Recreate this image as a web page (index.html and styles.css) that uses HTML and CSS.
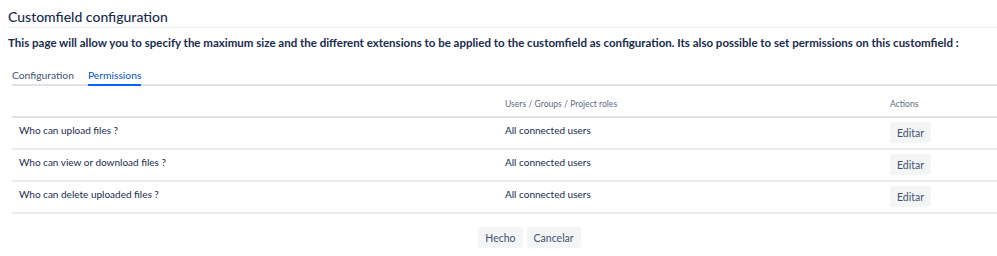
FILE: index.html
```html
<!DOCTYPE html>
<html lang="en">

<head>
    <meta charset="UTF-8">
    <title>Customfield configuration</title>
    <link rel="stylesheet" href="styles.css">
</head>

<body>
    <header class="page-header">
        <h2>Customfield configuration</h2>
    </header>
    <p class="description">
        This page will allow you to specify the maximum size and the different extensions to be applied to the customfield as configuration. Its also possible to set permissions on this customfield :
    </p>

    <div class="content">
        <ul class="tabs">
            <li><a href="#">Configuration</a></li>
            <li class="active"><a href="#">Permissions</a></li>
        </ul>

        <table class="perm-table">
            <thead>
                <tr>
                    <th class="col-question"></th>
                    <th class="col-users">Users / Groups / Project roles</th>
                    <th class="col-actions">Actions</th>
                </tr>
            </thead>
            <tbody>
                <tr>
                    <td>Who can upload files ?</td>
                    <td>All connected users</td>
                    <td><button class="btn">Editar</button></td>
                </tr>
                <tr>
                    <td>Who can view or download files ?</td>
                    <td>All connected users</td>
                    <td><button class="btn">Editar</button></td>
                </tr>
                <tr>
                    <td>Who can delete uploaded files ?</td>
                    <td>All connected users</td>
                    <td><button class="btn">Editar</button></td>
                </tr>
            </tbody>
        </table>

        <div class="form-buttons">
            <button class="btn">Hecho</button>
            <button class="btn">Cancelar</button>
        </div>
    </div>
</body>

</html>
```

FILE: styles.css
```css
body {
    margin: 0;
    padding: 0 0 0 8px;
    font-family: Lato, Roboto, sans-serif;
    color: #172b4d;
    background-color: #fff;
}

.page-header {
    border-bottom: 1px solid #ebecf0;
    padding-top: 8px;
    height: 19px;
}

.page-header h2 {
    margin: 0;
    font-size: 14px;
    font-weight: 500;
    line-height: 18px;
}

.description {
    margin: 8px 0 0;
    font-size: 11.5px;
    font-weight: 700;
    line-height: 14px;
    white-space: nowrap;
}

.content {
    padding-left: 4px;
}

.tabs {
    list-style: none;
    margin: 18px 0 0;
    padding: 0;
    display: flex;
    gap: 14px;
    border-bottom: 2px solid #dfe1e6;
    height: 16px;
}

.tabs a {
    display: block;
    height: 16px;
    font-size: 10.3px;
    line-height: 14px;
    color: #42526e;
    text-decoration: none;
}

.tabs .active a {
    color: #0052cc;
    border-bottom: 2px solid #0065ff;
}

.perm-table {
    width: 100%;
    border-collapse: collapse;
    font-size: 10px;
    margin-top: 2px;
}

.perm-table th {
    text-align: left;
    font-size: 8.6px;
    font-weight: 400;
    line-height: 12px;
    color: #5e6c84;
    padding: 10px 7px 6px;
    border-bottom: 2px solid #dfe1e6;
}

.perm-table td {
    vertical-align: top;
    padding: 4px 7px 5px;
    height: 21px;
    line-height: 16px;
    border-bottom: 2px solid #ebecf0;
}

.perm-table .col-question {
    width: 472px;
}

.perm-table .col-users {
    width: 371px;
}

.btn {
    display: block;
    font-family: inherit;
    font-size: 10.5px;
    color: #42526e;
    background-color: #f4f5f7;
    border: none;
    border-radius: 3px;
    padding: 0 7px;
    height: 21px;
}

.form-buttons {
    display: flex;
    justify-content: center;
    gap: 4px;
    margin-top: 13px;
    padding-left: 50px;
}
```
